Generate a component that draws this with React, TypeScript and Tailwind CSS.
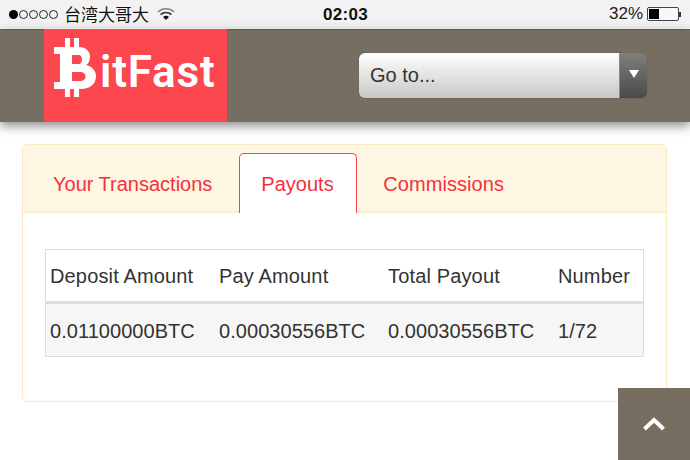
const columns = [
	{ title: "Deposit Amount", value: "0.01100000BTC", width: "w-[169px]" },
	{ title: "Pay Amount", value: "0.00030556BTC", width: "w-[169px]" },
	{ title: "Total Payout", value: "0.00030556BTC", width: "w-[170px]" },
	{ title: "Number", value: "1/72", width: "flex-1" },
];

const StatusBar = () => (
	<div className="h-[28px] bg-[#f2f2f2] flex items-center justify-between pl-[9px] pr-[9px] text-[#111] relative">
		<div className="flex items-center">
			<div className="flex items-center gap-[1px]">
				<span className="w-[9px] h-[9px] rounded-full bg-black" />
				{[0, 1, 2, 3].map((i) => (
					<span key={i} className="w-[9px] h-[9px] rounded-full border border-[#222]" />
				))}
			</div>
			<span className="ml-[6px] text-[17px] font-['Noto_Sans_CJK_TC',sans-serif]">台湾大哥大</span>
			<svg className="ml-[8px]" width="18" height="14" viewBox="0 0 18 14">
				<path d="M1 5 A11.5 11.5 0 0 1 17 5" fill="none" stroke="#888" strokeWidth="1.7" />
				<path d="M3.6 7.6 A8 8 0 0 1 14.4 7.6" fill="none" stroke="#333" strokeWidth="1.7" />
				<path d="M6 10 A4.5 4.5 0 0 1 12 10 L9 13 Z" fill="#111" />
			</svg>
		</div>
		<span className="absolute left-[323px] top-[3px] text-[17px] font-semibold leading-[24px] tracking-[0.3px]">02:03</span>
		<div className="flex items-center gap-[4px]">
			<span className="text-[17px] leading-[24px] text-[#222]">32%</span>
			<div className="flex items-center">
				<div className="w-[32px] h-[14px] border border-[#444] rounded-[2px] p-[1px] bg-[#f8f8f8]">
					<div className="w-[10px] h-full bg-black" />
				</div>
				<div className="w-[2px] h-[5px] bg-[#333]" />
			</div>
		</div>
	</div>
);

const Logo = () => (
	<div className="ml-[44px] w-[183px] h-[93px] bg-[#fc474e] flex items-start pl-[10px] pt-[9px] text-white">
		{/* bitcoin mark */}
		<svg width="42" height="60" viewBox="0 0 42 60" fill="white" fillRule="evenodd">
			<path d="M11 0h5v10h-5zM20 0h5v10h-5zM11 50h5v9h-5zM20 50h5v9h-5z" />
			<path d="M0 9H24C33 9 36 14 36 19C36 23 34 26 32 27C37 28 42 32 42 38C42 46 36 51 27 51H0V44H6V16H0ZM18 17V26H25C29 26 29 17 25 17ZM18 34V43H27C33 43 33 34 27 34Z" />
		</svg>
		<span className="ml-[4px] mt-[8px] text-[44px] leading-[53px] font-semibold tracking-[0.8px] font-['Roboto',sans-serif]">itFast</span>
	</div>
);

const Select = () => (
	<div className="w-[288px] h-[45px] rounded-[6px] flex overflow-hidden shadow-[0_0_1px_rgba(0,0,0,0.4)]">
		<div className="flex-1 flex items-center pl-[11px] text-[20px] text-[#333] bg-linear-to-b from-white to-[#c9c8c6]">
			Go to...
		</div>
		<div className="w-[28px] flex justify-center pt-[17px] border-l border-[#8a8a86] bg-linear-to-b from-[#7f7f7d] to-[#4b4b4b]">
			<div className="w-0 h-0 border-l-[5px] border-r-[5px] border-t-[8px] border-l-transparent border-r-transparent border-t-white" />
		</div>
	</div>
);

const App = () => {
	return (
		<div className="w-[690px] h-[460px] bg-white overflow-hidden relative font-['Liberation_Sans',Arial,sans-serif]">
			<StatusBar />
			<div className="h-[1px] bg-white" />
			<header className="h-[93px] bg-[#766e60] border-t border-t-[#5e574c] flex items-center shadow-[0_4px_10px_rgba(0,0,0,0.45)] relative">
				<div className="-mt-[1px]">
					<Logo />
				</div>
				<div className="ml-[132px] -mt-[2px]">
					<Select />
				</div>
			</header>

			<main className="mx-[22px] mt-[22px] w-[645px] h-[258px] border border-[#fbe9c4] rounded-[5px] overflow-hidden">
				<div className="h-[68px] bg-[#fdf7e3] border-b-2 border-b-[#fcecc8] flex items-end pl-[8px] text-[20px] text-[#f5303c]">
					<div className="h-[59px] pl-[22px] pr-[27px] flex items-center -mb-[2px]">Your Transactions</div>
					<div className="h-[60px] w-[118px] flex items-center pl-[21px] -mb-[2px] bg-white border border-[#f7404a] border-b-0 rounded-t-[5px]">
						Payouts
					</div>
					<div className="h-[59px] px-[26px] flex items-center -mb-[2px] tracking-[0.05px]">Commissions</div>
				</div>

				<div className="ml-[22px] mt-[36px] w-[599px] border border-[#dddddd] text-[20px] text-[#333]">
					<div className="h-[54px] flex items-center border-b-[3px] border-b-[#dddddd] pt-[1px] tracking-[0.15px]">
						{columns.map((col) => (
							<div key={col.title} className={`${col.width} pl-[4px]`}>
								{col.title}
							</div>
						))}
					</div>
					<div className="h-[52px] flex items-center bg-[#f6f6f6] pt-[1px] tracking-[0.05px]">
						{columns.map((col) => (
							<div key={col.title} className={`${col.width} pl-[4px]`}>
								{col.value}
							</div>
						))}
					</div>
				</div>
			</main>

			<button className="absolute right-0 bottom-0 w-[72px] h-[72px] bg-[#766e60] flex items-center justify-center">
				<svg width="24" height="16" viewBox="0 0 24 16">
					<path d="M2.5 13 L12 4 L21.5 13" fill="none" stroke="white" strokeWidth="4" />
				</svg>
			</button>
		</div>
	);
};

export default App;
